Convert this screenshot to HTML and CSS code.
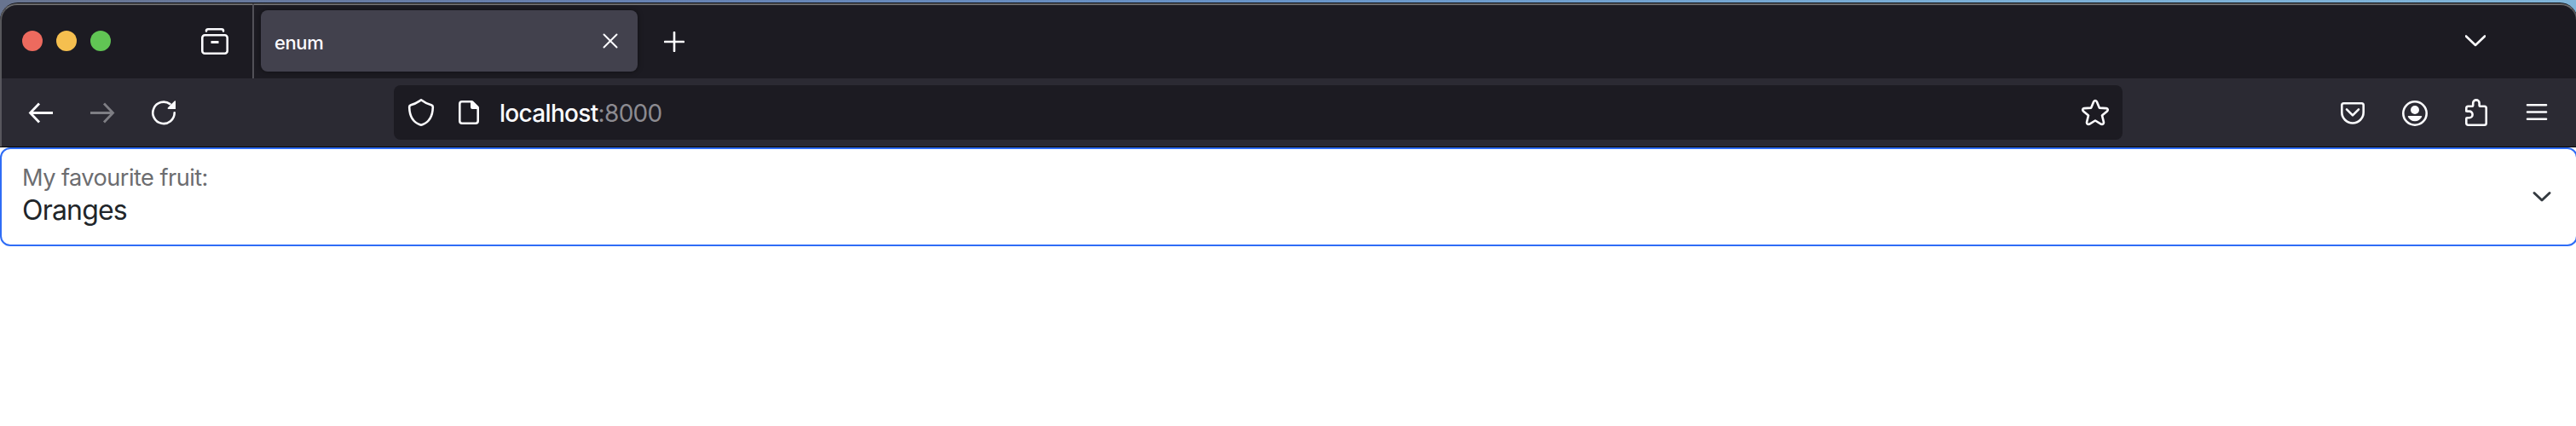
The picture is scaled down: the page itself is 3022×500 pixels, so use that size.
FILE: index.html
```html
<!DOCTYPE html>
<html lang="en">
<head>
<meta charset="utf-8">
<title>enum</title>
<link rel="stylesheet" href="styles.css">
</head>
<body>
<div class="desktop">
  <div class="window">
    <div class="tabstrip">
      <div class="lights"><span class="light close"></span><span class="light minimize"></span><span class="light expand"></span></div>
      <svg class="icon view" viewBox="0 0 32 32"><path d="M6 4.500V4q0-1.700 2-1.700h16q2 0 2 1.700v.5" /><rect x="1.300" y="9.300" width="29.400" height="21.400" rx="3"/><path d="M13 17.500h6" stroke-width="3" stroke-linecap="square"/></svg>
      <div class="separator"></div>
      <div class="tab"><span class="tab-title">enum</span>
        <svg class="tab-close" viewBox="0 0 18 18"><path d="M1.500 1.500l15 15M16.500 1.500l-15 15"/></svg>
      </div>
      <svg class="new-tab" viewBox="0 0 24 24"><path d="M12 1v22M1 12h22"/></svg>
      <svg class="all-tabs" viewBox="0 0 24 14"><path d="M1 1.500l11 10.500L23 1.500"/></svg>
    </div>
    <div class="navbar">
      <div class="nav-buttons">
        <svg class="icon" viewBox="0 0 32 32"><path d="M14 5.500L3.500 16.500 14 27.500M3.500 16.500H30" stroke-width="2.800"/></svg>
        <svg class="icon disabled" viewBox="0 0 32 32"><path d="M18 5.500l10.500 11L18 27.500M28.500 16.500H2" stroke-width="2.800"/></svg>
        <svg class="icon" viewBox="0 0 32 32"><path d="M23.500 6.100A12.700 12.700 0 1 0 28.700 16.300"/><path class="solid" d="M30 2.500V12h-8.500q-1.500-.3-.7-1.500l7.700-7.700q.8-.8 1.500-.3z"/></svg>
      </div>
      <div class="urlbar">
        <svg class="icon" viewBox="0 0 32 32"><path d="M16 1.300Q21.500 5.500 28 7.300q2 .7 1.800 2.700C29.500 20 25 27.500 17.500 30.300q-1.500.6-3 0C7 27.500 2.500 20 2.200 10 2 8 2.800 7.700 4 7.300 10.500 5.500 12.500 3.500 16 1.300z"/></svg>
        <svg class="icon page" viewBox="0 0 32 32"><path d="M18.500 3.300H8q-2.700 0-2.700 2.700v20q0 2.700 2.700 2.700h16q2.700 0 2.700-2.700V11.500"/><path class="solid" d="M18 2h1.500q1 0 1.700.7l6.100 6.100q.7.700.7 1.700V12h-8q-2 0-2-2z"/></svg>
        <span class="address">localhost<span class="port">:8000</span></span>
        <svg class="icon star" viewBox="0 0 32 32"><path d="M14.200 3.200Q16 .8 17.800 3.200L20.800 10.600l8.200.5q2.900.7 1 3.300l-6 5 2 8.200q0 2.700-2.900 2.200L16 25.500 8.900 29.800Q6 30.300 6 27.600l2-8.200-6-5q-1.900-2.600 1-3.300l8.200-.5z"/></svg>
      </div>
      <div class="tools">
        <svg class="icon" viewBox="0 0 32 32"><path d="M5.500 5.300h21q2.200 0 2.200 2.200v8.300a12.700 12.700 0 0 1-25.400 0V7.500q0-2.200 2.200-2.200zM9 12.300l7 7 7-7"/></svg>
        <svg class="icon" viewBox="-1 0 32 32"><circle cx="16" cy="17" r="13.700"/><circle class="solid" cx="16" cy="13" r="5"/><path class="solid" d="M8.500 20h15q1.200.3.6 1.300-2.700 5-8.100 5t-8.100-5q-.6-1 .6-1.300z"/></svg>
        <svg class="icon" viewBox="-1 0 32 32"><path d="M4.300 14.500V11q0-2.200 2.200-2.200h4.800q.9 0 .9-1V5.100a3.700 3.700 0 0 1 7.400 0v2.700q0 1 .9 1H25.500q2.200 0 2.200 2.200v17.500q0 2.200-2.200 2.200h-19q-2.200 0-2.200-2.200v-5.200q0-1.100 1-1.100h2.500a3.800 3.800 0 0 0 0-7.600H5.300q-1 0-1-.9z"/></svg>
        <svg class="icon" viewBox="0 0 32 32"><path d="M5 7.300h22M5 15.500h22M5 23.700h22"/></svg>
      </div>
    </div>
  </div>
</div>
<main class="field">
  <div class="field-text">
    <label class="label">My favourite fruit:</label>
    <span class="value">Oranges</span>
  </div>
  <svg class="caret" viewBox="0 0 24 16"><path d="M3 3.500l9 8.500 9-8.500"/></svg>
</main>
</body>
</html>
```
FILE: styles.css
```css
* { box-sizing: border-box; }
body {
  margin: 0;
  height: 500px;
  overflow: hidden;
  background: #fff;
  font-family: Inter, "Liberation Sans", sans-serif;
}
svg {
  display: block;
  flex: none;
  fill: none;
  stroke: #fbfbfe;
  stroke-width: 2.6;
  stroke-linecap: round;
  stroke-linejoin: round;
}
.solid { fill: #fbfbfe; stroke: none; }
.desktop {
  height: 173px;
  padding-top: 3px;
  overflow: hidden;
  background: linear-gradient(90deg, #68748f 0, #6680b0 700px, #6894c8 1500px, #7bafd6 2300px, #80b4d8 100%);
}
.window {
  width: 3024px;
  height: 170px;
  padding: 1px 0 1px;
  background: #050507;
  border-radius: 21px 21px 0 0;
}
.tabstrip {
  display: flex;
  align-items: center;
  height: 88px;
  padding: 0 0 2px 24px;
  background: #1c1b22;
  border: 2px solid #57575b;
  border-top-color: #6a6a6c;
  border-bottom: 0;
  border-radius: 20px 20px 0 0;
}
.lights { display: flex; gap: 16px; }
.light { width: 24px; height: 24px; border-radius: 50%; }
.close { background: #ed6a5e; }
.minimize { background: #f5bf4f; }
.expand { background: #61c554; }
.icon { width: 32px; height: 32px; }
.view { margin-left: 106px; }
.separator { width: 2px; height: 88px; margin-left: 28px; background: #525158; }
.tab {
  display: flex;
  align-items: center;
  justify-content: space-between;
  width: 442px;
  height: 72px;
  margin-left: 8px;
  padding: 0 23px 0 16px;
  border-radius: 8px;
  background: #42414d;
  box-shadow: 0 0 6px rgba(0, 0, 0, .45);
}
.tab-title {
  padding-top: 3px;
  color: #fbfbfe;
  font-size: 22px;
  font-weight: 500;
  letter-spacing: -.4px;
}
.tab-close { width: 18px; height: 18px; stroke-width: 2; }
.new-tab { width: 24px; height: 24px; margin: 2px 0 0 31px; }
.all-tabs { width: 24px; height: 14px; margin: 0 106px 0 auto; }
.navbar {
  display: flex;
  align-items: center;
  height: 80px;
  padding: 0 32px 0 30px;
  background: #2b2a33;
  border-left: 2px solid #57565d;
}
.nav-buttons { display: flex; gap: 40px; }
.disabled { opacity: .4; }
.nav-buttons svg:not(:last-child) { stroke-linecap: butt; stroke-linejoin: miter; }
.urlbar {
  display: flex;
  align-items: center;
  width: 2028px;
  height: 64px;
  margin-left: 254px;
  padding: 0 16px;
  border-radius: 8px;
  background: #1c1b22;
}
.page { margin-left: 24px; }
.address {
  margin-left: 20px;
  padding-top: 2px;
  color: #fbfbfe;
  font-size: 28px;
  font-weight: 500;
  letter-spacing: -.68px;
}
.port { color: #8c8b91; font-weight: 400; }
.star { margin-left: auto; }
.tools { display: flex; gap: 40px; margin-left: auto; }
.field {
  display: flex;
  justify-content: space-between;
  width: 3024px;
  height: 116px;
  padding: 16px 28px 0 24px;
  border: 2px solid #2f6df6;
  border-radius: 12px;
  background: #fff;
}
.field-text { display: flex; flex-direction: column; }
.label {
  height: 35px;
  line-height: 36px;
  color: #6c6d70;
  font-size: 27.200px;
  letter-spacing: -.55px;
}
.value {
  height: 42px;
  line-height: 42px;
  color: #212529;
  font-size: 32px;
  letter-spacing: -.8px;
}
.caret { width: 24px; height: 16px; margin-top: 32px; stroke: #343a40; stroke-width: 3; }
```
